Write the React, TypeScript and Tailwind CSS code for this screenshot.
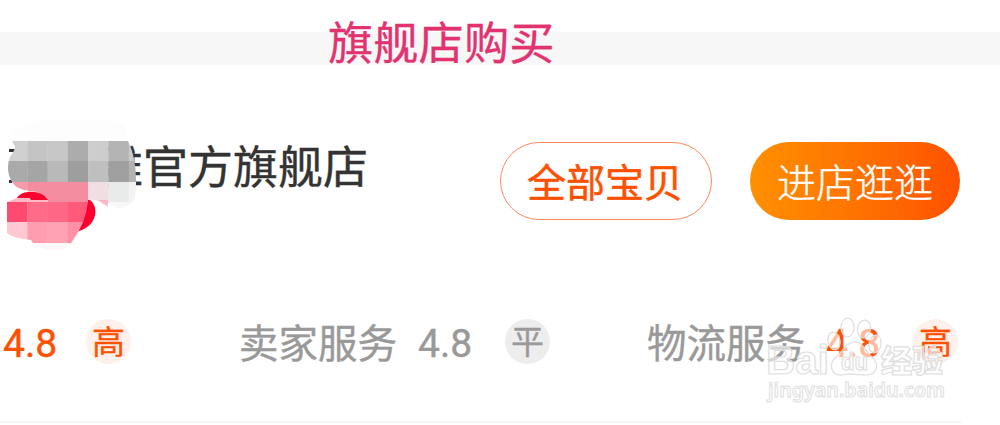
interface Rating {
  label?: string;
  score: string;
  level: string;
  high: boolean;
  className: string;
}

const ratings: Rating[] = [
  { score: '4.8', level: '高', high: true, className: 'w-[239px] pl-[3px]' },
  { label: '卖家服务', score: '4.8', level: '平', high: false, className: 'w-[408px]' },
  { label: '物流服务', score: '4.8', level: '高', high: true, className: '' },
];

const mosaicRows = [
  { y: 141, colors: ['#d0d0d0', '#c4c4c4', '#c7c7c7', '#acacac', '#cdcdcd', '#b4b4b4', '#c9c9c9'] },
  { y: 161, colors: ['#aaaaaa', '#a5a5a5', '#b9b9b9', '#9e9e9e', '#bfbfbf', '#9f9f9f', '#b3b3b3'] },
  { y: 182, colors: ['#f79bad', '#f48da0', '#f38c9f', '#f38c9f', '#efdfe3', '#e9eaea', '#f3f3f3'] },
  { y: 202, colors: ['#ff4a70', '#ff6b88', '#ff6786', '#ff5a7a'] },
  { y: 222, colors: ['#ffc8d3', '#ff9caf', '#ffa2b4', '#ff91a6'] },
];

function BlurredLogo() {
  return (
    <svg className="absolute left-0 top-0" width="150" height="255" viewBox="0 0 150 255">
      <defs>
        <clipPath id="top">
          <path d="M12 141H128Q139 163 135 199Q128 209 116 208L101 202Q97 199 88 200V202H48Q43 191 30 191Q17 190 12 182Q5 170 10 157Q15 150 15 147Z" />
        </clipPath>
        <clipPath id="bottom">
          <path d="M7 202L17 198H48V200H88Q87 222 71 243H33L31 240Q12 238 7 233Z" />
        </clipPath>
      </defs>
      <path d="M10 141Q14 124 40 121H117Q127 126 128 141Z" fill="#fdfdfd" />
      <path d="M31 240H76Q72 250 52 250Q39 250 31 240Z" fill="#fff7f8" />
      <path d="M9 149H16V152H9ZM9 180H12V183H9Z" fill="#333" />
      <path d="M88 199C99 204 99 225 79 231L75 220Z" fill="#fc0030" />
      <g clipPath="url(#top)">
        {mosaicRows.slice(0, 3).map((row) =>
          row.colors.map((color, i) => (
            <rect key={`${row.y}-${i}`} x={7 + i * 20.3} y={row.y} width="20.6" height="21" fill={color} />
          ))
        )}
        <path d="M88 200H108V210H88Z" fill="#ffb6c4" />
        <path d="M109 202H137V211H109Z" fill="#f8f8f8" />
      </g>
      <path d="M17 198C22 189 43 190 48 200H31L29 198Z" fill="#fc0030" />
      <path d="M30 191Q38 191 42 192L47 199H88V182H48L27 184Z" fill="#f48da0" />
      <g clipPath="url(#bottom)">
        {mosaicRows.slice(3).map((row) =>
          row.colors.map((color, i) => (
            <rect key={`${row.y}-${i}`} x={7 + i * 20.3} y={row.y} width="20.6" height="21" fill={color} />
          ))
        )}
      </g>
      <path d="M7 202L17 198H30V200H48V202Z" fill="#ffb9c6" />
      <path d="M101 202Q106 200 108 207Z" fill="#ffb9c6" />
    </svg>
  );
}

function Watermark() {
  return (
    <svg
      className="pointer-events-none absolute left-[760px] top-[310px]"
      width="200"
      height="100"
      viewBox="0 0 200 100"
      fill="#fff"
      fillOpacity="0.6"
      stroke="#dedede"
      strokeWidth="1.2"
    >
      <ellipse cx="87.5" cy="17.5" rx="6.5" ry="9.5" />
      <ellipse cx="104" cy="19" rx="6.5" ry="9" transform="rotate(10 104 19)" />
      <ellipse cx="74" cy="31" rx="6" ry="9" transform="rotate(-12 74 31)" />
      <ellipse cx="115" cy="34" rx="6" ry="9" transform="rotate(10 115 34)" />
      <path d="M94 32C103 31 105 42 112 47C120 54 117 65 106 65C99 65 88 63 82 65C71 66 68 54 76 47C83 42 85 33 94 32Z" />
      <g fontFamily="'Liberation Sans', sans-serif" fontWeight="700">
        <text x="6" y="64" fontSize="41" textLength="63" lengthAdjust="spacingAndGlyphs">Bai</text>
        <text x="81" y="60" fontSize="24" textLength="27" lengthAdjust="spacingAndGlyphs">du</text>
      </g>
      <text x="121" y="62" fontFamily="'Noto Sans CJK SC', sans-serif" fontWeight="900" fontSize="31" textLength="62">经验</text>
      <text
        x="8"
        y="87"
        fontFamily="'Noto Sans', sans-serif"
        fontWeight="600"
        fontSize="20"
        strokeWidth="1"
        textLength="177"
        lengthAdjust="spacingAndGlyphs"
      >
        jingyan.baidu.com
      </text>
    </svg>
  );
}

function RatingItem({ label, score, level, high, className }: Rating) {
  return (
    <div className={`flex shrink-0 items-center ${className}`}>
      {label && (
        <span className="-mt-0.5 mr-[21px] text-[39.5px] leading-[46px] text-[#999] [-webkit-text-stroke:0.4px]">
          {label}
        </span>
      )}
      <span
        className={`mt-[5px] w-[54px] font-[Roboto] text-[39px] leading-[46px] [-webkit-text-stroke:0.4px] ${
          high ? 'text-[#ff5000]' : 'text-[#999]'
        }`}
      >
        {score}
      </span>
      <span
        className={`flex size-[45px] items-center justify-center rounded-full pb-[3px] text-[33px] leading-none [-webkit-text-stroke:0.3px] ${
          label ? 'ml-[33px]' : 'ml-[29px]'
        } ${high ? 'bg-[#fff0eb] text-[#ff5000]' : 'bg-[#ededed] text-[#999]'}`}
      >
        {level}
      </span>
    </div>
  );
}

export default function App() {
  return (
    <div className="relative h-[425px] w-[1000px] overflow-hidden bg-white font-['Noto_Sans_CJK_SC',sans-serif]">
      <header className="mt-8 flex h-[33px] items-center bg-[#f7f7f7] pl-[328px]">
        <h1 className="-mt-[17px] text-[45.3px] leading-[50px] whitespace-nowrap text-[#e2326f] [-webkit-text-stroke:0.3px]">
          旗舰店购买
        </h1>
      </header>

      <section className="flex h-[233px] items-start pt-[77px]">
        <h2 className="-mt-[2px] w-[500px] shrink-0 pl-[98px] text-[45px] leading-[50px] whitespace-nowrap text-[#333] [-webkit-text-stroke:0.4px]">
          雅官方旗舰店
        </h2>
        <button className="mr-[38px] h-[78px] w-[212px] shrink-0 rounded-full border-[1.5px] border-[#ff8a5c] pr-[7px] pb-[2px] pl-[5px] text-[39px] leading-none text-[#ff5000] [-webkit-text-stroke:0.5px]">
          全部宝贝
        </button>
        <button className="h-[78px] w-[210px] shrink-0 rounded-full bg-linear-to-r from-[#ff9000] to-[#ff5000] pb-[2px] text-[39px] leading-none font-light text-white [-webkit-text-stroke:0.4px]">
          进店逛逛
        </button>
      </section>

      <section className="flex h-[125px] w-[961px] items-start border-b-2 border-[#f5f5f5] pt-[18px]">
        {ratings.map((rating, i) => (
          <RatingItem key={i} {...rating} />
        ))}
      </section>

      <BlurredLogo />
      <Watermark />
    </div>
  );
}
